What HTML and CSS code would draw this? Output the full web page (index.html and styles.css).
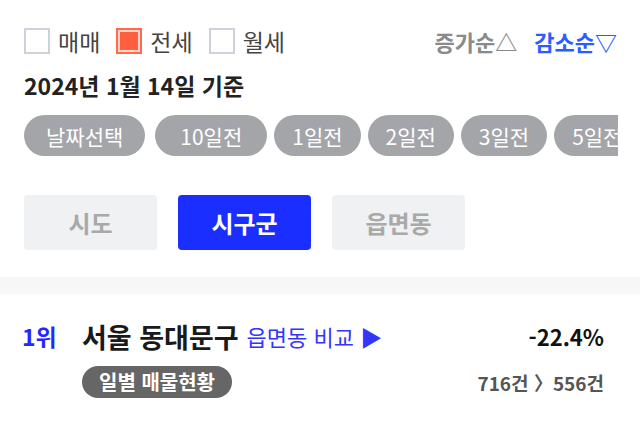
FILE: index.html
```html
<!DOCTYPE html>
<html lang="ko">
<head>
  <meta charset="UTF-8">
  <title>매물 증감 순위</title>
  <meta name="viewport" content="width=device-width, initial-scale=1.0">
  <link rel="stylesheet" href="styles.css">
</head>
<body>

  <!-- 거래유형 + 정렬 -->
  <div class="filter-bar">
    <div class="types">
      <label class="type"><span class="box"></span>매매</label>
      <label class="type"><span class="box checked"></span>전세</label>
      <label class="type"><span class="box"></span>월세</label>
    </div>
    <div class="sort">
      <span class="sort-item">증가순△</span>
      <span class="sort-item active">감소순▽</span>
    </div>
  </div>

  <div class="base-date">2024년 1월 14일 기준</div>

  <!-- 날짜 선택 -->
  <div class="date-pills">
    <button class="w-pick">날짜선택</button>
    <button class="w-10">10일전</button>
    <button>1일전</button>
    <button>2일전</button>
    <button>3일전</button>
    <button>5일전</button>
  </div>

  <!-- 지역 단위 -->
  <div class="area-tabs">
    <button>시도</button>
    <button class="active">시구군</button>
    <button>읍면동</button>
  </div>

  <div class="divider"></div>

  <!-- 순위 목록 -->
  <div class="rank-row">
    <div class="rank-line">
      <span class="rank">1위</span>
      <span class="region">서울 동대문구</span>
      <a class="compare">읍면동 비교 ▶</a>
      <span class="rate">-22.4%</span>
    </div>
    <div class="rank-line sub">
      <span class="daily">일별 매물현황</span>
      <span class="counts">716건 〉556건</span>
    </div>
  </div>

</body>
</html>
```

FILE: styles.css
```css
/* Grundlayout */
body {
  margin: 0;
  padding: 0;
  background: #fff;
  font-family: "Noto Sans CJK KR", "Noto Sans", sans-serif;
  color: #222;
  overflow: hidden;
}
button {
  font-family: inherit;
  border: none;
  cursor: pointer;
}

/* Filterzeile */
.filter-bar {
  display: flex;
  align-items: center;
  justify-content: space-between;
  padding: 24px 23px 0 24px;
  height: 34px;
}
.types {
  display: flex;
  gap: 16px;
}
.type {
  display: flex;
  align-items: center;
  gap: 8px;
  font-size: 23px;
  color: #444;
}
.box {
  width: 22px;
  height: 22px;
  border: 2px solid #cdd1dc;
  background: #fff;
}
.box.checked {
  border-color: #ff6a4c;
  background: #ff5f3f;
  box-shadow: inset 0 0 0 2px #ffd6cc;
}
.sort {
  display: flex;
  gap: 17px;
  font-size: 22px;
  font-weight: bold;
}
.sort-item {
  color: #8a8a8a;
}
.sort-item.active {
  color: #2b5cff;
}

.base-date {
  margin: 13px 24px 0;
  font-size: 23px;
  font-weight: bold;
  line-height: 28px;
}

/* Datum-Pillen */
.date-pills {
  display: flex;
  gap: 7px;
  margin: 16px 22px 0 24px;
  overflow: hidden;
}
.date-pills button {
  flex: none;
  height: 41px;
  padding: 0 18px;
  border-radius: 21px;
  background: #a4a5a9;
  color: #fff;
  font-size: 21px;
}
.date-pills .w-pick { padding: 0 22px; margin-right: 3px; }
.date-pills .w-10 { padding: 0 25px; }

/* Gebiets-Tabs */
.area-tabs {
  display: flex;
  gap: 21px;
  margin: 39px 24px 0;
}
.area-tabs button {
  width: 133px;
  height: 55px;
  border-radius: 4px;
  background: #f0f1f3;
  color: #a9a9a9;
  font-size: 24px;
  font-weight: bold;
}
.area-tabs button.active {
  background: #1a2eff;
  color: #fff;
}

.divider {
  margin-top: 27px;
  height: 17px;
  background: #f7f7f7;
}

/* Rangliste */
.rank-row {
  padding: 27px 36px 0 22px;
}
.rank-line {
  display: flex;
  align-items: center;
  height: 30px;
}
.rank {
  width: 60px;
  color: #2626ff;
  font-size: 23px;
  font-weight: bold;
}
.region {
  font-size: 27px;
  font-weight: bold;
  color: #1a1a1a;
}
.compare {
  margin-left: 8px;
  color: #3434ff;
  font-size: 22px;
}
.rate {
  margin-left: auto;
  font-size: 22px;
  font-weight: bold;
  color: #111;
}
.rank-line.sub {
  margin-top: 15px;
  height: 32px;
}
.daily {
  margin-left: 60px;
  height: 32px;
  line-height: 32px;
  padding: 0 17px;
  border-radius: 16px;
  background: #666;
  color: #fff;
  font-size: 20px;
  font-weight: bold;
}
.counts {
  margin-left: auto;
  font-size: 19px;
  font-weight: bold;
  color: #555;
}
```
